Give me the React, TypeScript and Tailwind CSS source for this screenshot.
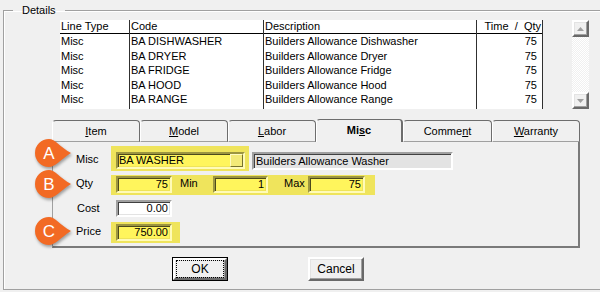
import clsx from "clsx";

const rows = [
  ["Misc", "BA DISHWASHER", "Builders Allowance Dishwasher", "75"],
  ["Misc", "BA DRYER", "Builders Allowance Dryer", "75"],
  ["Misc", "BA FRIDGE", "Builders Allowance Fridge", "75"],
  ["Misc", "BA HOOD", "Builders Allowance Hood", "75"],
  ["Misc", "BA RANGE", "Builders Allowance Range", "75"],
];

const cols = [
  { title: "Line Type", w: "w-[70px]", right: false },
  { title: "Code", w: "w-[134px]", right: false },
  { title: "Description", w: "w-[213px]", right: false },
  { title: "Time  /  Qty", w: "w-[66px]", right: true },
];

const sunken =
  "border-2 border-t-[#a0a0a0] border-l-[#a0a0a0] border-b-white border-r-white shadow-[inset_1px_1px_0_#404040,inset_-1px_-1px_0_#e3e3e3]";
const sunkenYellow =
  "border-2 border-t-[#9c9540] border-l-[#9c9540] border-b-[#fffbb8] border-r-[#fffbb8] shadow-[inset_1px_1px_0_#4d4a1c,inset_-1px_-1px_0_#efe45a] bg-[#fff55c]";
const raised =
  "border-2 border-t-white border-l-white border-b-[#696969] border-r-[#696969] shadow-[inset_-1px_-1px_0_#a0a0a0,inset_1px_1px_0_#e3e3e3]";

const Callout = ({ letter, top }: { letter: string; top: string }) => (
  <div className={clsx("absolute left-[34px] w-[40px] h-[32px]", top)}>
    <svg width="40" height="32" viewBox="0 0 40 32" className="absolute inset-0 drop-shadow-[1px_2px_1.5px_rgba(0,0,0,0.35)]">
      <path
        d="M15 1 A14 14 0 1 0 15 29 C21 29 26 22 37 15 C26 9 21 1 15 1 Z"
        fill="#f26a24"
      />
    </svg>
    <span className="absolute left-[1px] top-[1px] w-[28px] h-[28px] flex items-center justify-center text-white text-[17px] leading-none">
      {letter}
    </span>
  </div>
);

const Tab = ({
  w,
  active,
  children,
}: {
  w: string;
  active?: boolean;
  children: React.ReactNode;
}) => (
  <div
    className={clsx(
      w,
      "flex items-center justify-center rounded-t-[4px] border-t border-l border-t-[#6d6d6d] border-l-white",
      active
        ? "h-[23px] border-r-2 border-r-[#6d6d6d] font-bold pb-[2px]"
        : "h-[22px] border-r border-r-[#6d6d6d] border-b border-b-[#a0a0a0]"
    )}
  >
    {children}
  </div>
);

const Arrow = ({ down }: { down?: boolean }) => (
  <div className={clsx("w-[17px] h-[17px] flex items-center justify-center bg-[#f0f0f0]", raised)}>
    <svg width="7" height="4" viewBox="0 0 7 4">
      <path d={down ? "M0 0 H7 L3.5 4 Z" : "M0 4 H7 L3.5 0 Z"} fill="#a0a0a0" />
    </svg>
  </div>
);

export default function App() {
  return (
    <div
      className="relative w-[600px] h-[292px] overflow-hidden bg-[#f0f0f0] text-black text-[11px] pl-[3px]"
      style={{ fontFamily: '"Liberation Sans", Arial, sans-serif' }}
    >
      <fieldset className="mt-[4px] w-[620px] h-[286px] border border-[#a0a0a0] shadow-[inset_1px_1px_0_#fff]">
        <legend className="ml-[9px] px-[9px] leading-[13px]">Details</legend>

        <div className="flex mt-[3px] ml-[56px]">
          <div className="flex h-[89px] bg-white">
            {cols.map((c, ci) => (
              <div key={ci} className={clsx(c.w, "border-r border-[#303030] flex flex-col")}>
                <div
                  className={clsx(
                    "h-[14px] border-b border-black leading-[13px] px-[1px] whitespace-pre",
                    c.right && "text-right"
                  )}
                >
                  {c.title}
                </div>
                {rows.map((r, ri) => (
                  <div
                    key={ri}
                    className={clsx(
                      "h-[14.5px] leading-[14.5px] whitespace-nowrap",
                      c.right ? "text-right pr-[5px]" : "pl-[1px]"
                    )}
                  >
                    {r[ci]}
                  </div>
                ))}
              </div>
            ))}
          </div>
          <div className="ml-[29px] flex flex-col w-[17px] h-[89px]">
            <Arrow />
            <div className="flex-1 bg-[image:repeating-conic-gradient(#ffffff_0_25%,#f0f0f0_0_50%)] bg-[length:2px_2px]" />
            <Arrow down />
          </div>
        </div>

        <div className="ml-[48px] mt-[10px] flex items-end w-[528px] h-[23px]">
          <Tab w="w-[88px]">
            <span><span className="underline">I</span>tem</span>
          </Tab>
          <Tab w="w-[88px]">
            <span><span className="underline">M</span>odel</span>
          </Tab>
          <Tab w="w-[88px]">
            <span><span className="underline">L</span>abor</span>
          </Tab>
          <Tab w="w-[87px]" active>
            <span>Mi<span className="underline">s</span>c</span>
          </Tab>
          <Tab w="w-[89px]">
            <span>Comme<span className="underline">n</span>t</span>
          </Tab>
          <Tab w="w-[88px]">
            <span><span className="underline">W</span>arranty</span>
          </Tab>
        </div>

        <div className="ml-[48px] w-[528px] h-[106px] border-l border-l-[#a0a0a0] border-r-2 border-b-2 border-r-[#7a7a7a] border-b-[#7a7a7a] pl-[23px] pt-[4px] flex flex-col">
          <div className="flex items-start">
            <div className="w-[35px] mt-[7px] leading-[13px]">Misc</div>
            <div className="w-[138px] h-[25px] bg-[#efe45c] pt-[6px] pl-[5px]">
              <div className={clsx("w-[129px] h-[17px] flex items-center justify-between pl-[1px]", sunkenYellow)}>
                <span className="leading-[13px]">BA WASHER</span>
                <div className="w-[13px] h-[13px] bg-[#f3ea78] border border-t-[#fffbc0] border-l-[#fffbc0] border-b-[#77722c] border-r-[#77722c]" />
              </div>
            </div>
            <div className={clsx("ml-[3px] mt-[6px] w-[201px] h-[18px] bg-[#e3e3e3] pl-[2px] leading-[14px]", sunken)}>
              Builders Allowance Washer
            </div>
          </div>

          <div className="flex items-start mt-[4px]">
            <div className="w-[35px] mt-[2px] leading-[13px]">Qty</div>
            <div className="w-[264px] h-[20px] bg-[#efe45c] pt-[1px] pl-[5px] flex items-start">
              <div className={clsx("w-[56px] h-[17px] text-right pr-[2px] leading-[13px]", sunkenYellow)}>75</div>
              <div className="w-[41px] pl-[8px] mt-[1px] leading-[13px]">Min</div>
              <div className={clsx("w-[55px] h-[17px] text-right pr-[2px] leading-[13px]", sunkenYellow)}>1</div>
              <div className="w-[40px] pl-[16px] mt-[1px] leading-[13px]">Max</div>
              <div className={clsx("w-[57px] h-[17px] text-right pr-[2px] leading-[13px]", sunkenYellow)}>75</div>
            </div>
          </div>

          <div className="flex items-start mt-[5px]">
            <div className="w-[35px] mt-[2px] leading-[13px] pl-[1px]">Cost</div>
            <div className="pl-[5px]">
              <div className={clsx("w-[56px] h-[17px] bg-white text-right pr-[2px] leading-[13px]", sunken)}>0.00</div>
            </div>
          </div>

          <div className="flex items-start mt-[5px]">
            <div className="w-[35px] mt-[3px] leading-[13px]">Price</div>
            <div className="w-[69px] h-[21px] bg-[#efe45c] pt-[2px] pl-[5px]">
              <div className={clsx("w-[56px] h-[17px] text-right pr-[2px] leading-[13px]", sunkenYellow)}>750.00</div>
            </div>
          </div>
        </div>

        <div className="flex mt-[9px] ml-[168px] gap-[80px]">
          <div className="w-[56px] h-[24px] border border-black">
            <div className={clsx("w-full h-full flex items-center justify-center", raised)}>
              <div className="w-[46px] h-[16px] outline outline-1 outline-dotted outline-black flex items-center justify-center text-[12px]">
                OK
              </div>
            </div>
          </div>
          <div className={clsx("w-[56px] h-[24px] flex items-center justify-center text-[12px]", raised)}>
            Cancel
          </div>
        </div>
      </fieldset>

      <Callout letter="A" top="top-[138px]" />
      <Callout letter="B" top="top-[169px]" />
      <Callout letter="C" top="top-[216px]" />
    </div>
  );
}
